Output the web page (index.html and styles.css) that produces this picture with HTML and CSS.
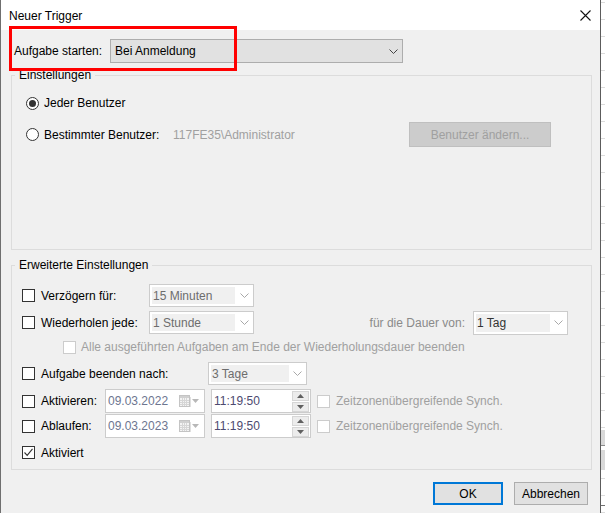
FILE: index.html
```html
<!DOCTYPE html>
<html lang="de">
<head>
<meta charset="utf-8">
<title>Neuer Trigger</title>
<link rel="stylesheet" href="styles.css">
</head>
<body>
<div class="screen">
  <div class="dialog">
    <div class="titlebar">
      <span class="title">Neuer Trigger</span>
      <svg class="close" width="11" height="11" viewBox="0 0 11 11"><path d="M0.5 0.5L10.5 10.5M10.5 0.5L0.5 10.5" stroke="#111" stroke-width="1.1" fill="none"/></svg>
    </div>

    <div class="start-row">
      <span class="start-label">Aufgabe starten:</span>
      <div class="main-select">
        <span>Bei Anmeldung</span>
        <svg class="chev" width="9" height="5" viewBox="0 0 9 5"><path d="M0.5 0.5L4.5 4.5L8.5 0.5" stroke="#444" stroke-width="1" fill="none"/></svg>
      </div>
    </div>

    <fieldset class="group group-settings">
      <legend>Einstellungen</legend>
      <div class="opt-row opt-first">
        <span class="radio checked"></span>
        <span>Jeder Benutzer</span>
      </div>
      <div class="opt-row opt-second">
        <span class="radio"></span>
        <span class="user-label">Bestimmter Benutzer:</span>
        <span class="user-name muted">117FE35\Administrator</span>
        <button class="btn btn-disabled">Benutzer ändern...</button>
      </div>
    </fieldset>

    <fieldset class="group group-advanced">
      <legend>Erweiterte Einstellungen</legend>

      <div class="adv-row row-delay">
        <span class="check"></span>
        <span class="adv-label w-short">Verzögern für:</span>
        <div class="combo w-105"><span class="field">15 Minuten</span><svg class="chev" width="9" height="5" viewBox="0 0 9 5"><path d="M0.5 0.5L4.5 4.5L8.5 0.5" stroke="#a8a8a8" stroke-width="1" fill="none"/></svg></div>
      </div>

      <div class="adv-row row-repeat">
        <span class="check"></span>
        <span class="adv-label w-short">Wiederholen jede:</span>
        <div class="combo w-105"><span class="field">1 Stunde</span><svg class="chev" width="9" height="5" viewBox="0 0 9 5"><path d="M0.5 0.5L4.5 4.5L8.5 0.5" stroke="#a8a8a8" stroke-width="1" fill="none"/></svg></div>
        <span class="dauer-label">für die Dauer von:</span>
        <div class="combo w-95 combo-dauer"><span class="field field-dark">1 Tag</span><svg class="chev" width="9" height="5" viewBox="0 0 9 5"><path d="M0.5 0.5L4.5 4.5L8.5 0.5" stroke="#a8a8a8" stroke-width="1" fill="none"/></svg></div>
      </div>

      <div class="adv-row row-sub">
        <span class="check disabled"></span>
        <span class="muted">Alle ausgeführten Aufgaben am Ende der Wiederholungsdauer beenden</span>
      </div>

      <div class="adv-row row-stop">
        <span class="check"></span>
        <span class="adv-label w-long">Aufgabe beenden nach:</span>
        <div class="combo w-99"><span class="field">3 Tage</span><svg class="chev" width="9" height="5" viewBox="0 0 9 5"><path d="M0.5 0.5L4.5 4.5L8.5 0.5" stroke="#a8a8a8" stroke-width="1" fill="none"/></svg></div>
      </div>

      <div class="adv-row row-date">
        <span class="check"></span>
        <span class="adv-label w-date">Aktivieren:</span>
        <div class="datebox">
          <span class="date-text">09.03.2022</span>
          <svg class="cal" width="12" height="12" viewBox="0 0 12 12"><rect x="0.5" y="0.5" width="10" height="11" fill="#f4f4f4" stroke="#c4c4c4"/><rect x="1" y="1" width="9" height="2" fill="#d0d0d0"/><path d="M1 5.5H10M1 7.5H10M1 9.5H10M3.5 3V11M5.5 3V11M7.5 3V11" stroke="#d6d6d6" stroke-width="1"/><rect x="11" y="2" width="1" height="10" fill="#e0e0e0"/></svg>
          <svg class="cal-arrow" width="7" height="4" viewBox="0 0 7 4"><path d="M0 0H7L3.5 4Z" fill="#b8b8b8"/></svg>
        </div>
        <div class="timebox">
          <span class="time-text">11:19:50</span>
          <span class="spin">
            <span class="spin-btn"><svg width="7" height="4" viewBox="0 0 7 4"><path d="M0 4H7L3.5 0Z" fill="#606060"/></svg></span>
            <span class="spin-btn"><svg width="7" height="4" viewBox="0 0 7 4"><path d="M0 0H7L3.5 4Z" fill="#606060"/></svg></span>
          </span>
        </div>
        <span class="check disabled"></span>
        <span class="muted">Zeitzonenübergreifende Synch.</span>
      </div>

      <div class="adv-row row-date row-expire">
        <span class="check"></span>
        <span class="adv-label w-date">Ablaufen:</span>
        <div class="datebox">
          <span class="date-text">09.03.2023</span>
          <svg class="cal" width="12" height="12" viewBox="0 0 12 12"><rect x="0.5" y="0.5" width="10" height="11" fill="#f4f4f4" stroke="#c4c4c4"/><rect x="1" y="1" width="9" height="2" fill="#d0d0d0"/><path d="M1 5.5H10M1 7.5H10M1 9.5H10M3.5 3V11M5.5 3V11M7.5 3V11" stroke="#d6d6d6" stroke-width="1"/><rect x="11" y="2" width="1" height="10" fill="#e0e0e0"/></svg>
          <svg class="cal-arrow" width="7" height="4" viewBox="0 0 7 4"><path d="M0 0H7L3.5 4Z" fill="#b8b8b8"/></svg>
        </div>
        <div class="timebox">
          <span class="time-text">11:19:50</span>
          <span class="spin">
            <span class="spin-btn"><svg width="7" height="4" viewBox="0 0 7 4"><path d="M0 4H7L3.5 0Z" fill="#606060"/></svg></span>
            <span class="spin-btn"><svg width="7" height="4" viewBox="0 0 7 4"><path d="M0 0H7L3.5 4Z" fill="#606060"/></svg></span>
          </span>
        </div>
        <span class="check disabled"></span>
        <span class="muted">Zeitzonenübergreifende Synch.</span>
      </div>

      <div class="adv-row row-active">
        <span class="check checked"><svg width="11" height="11" viewBox="0 0 11 11"><path d="M1.5 5.5L4.2 8.3L9.5 1.8" stroke="#333" stroke-width="1.1" fill="none"/></svg></span>
        <span class="adv-label">Aktiviert</span>
      </div>
    </fieldset>

    <div class="actions">
      <button class="btn btn-ok">OK</button>
      <button class="btn btn-cancel">Abbrechen</button>
    </div>

    <div class="annotation"></div>
  </div>
  <div class="backdrop"></div>
</div>
</body>
</html>
```

FILE: styles.css
```css
* { box-sizing: border-box; }
html, body { margin: 0; padding: 0; }
body {
  font-family: "Liberation Sans", Arial, sans-serif;
  font-size: 12px;
  color: #000;
  width: 605px;
  height: 513px;
  overflow: hidden;
  background: #fff;
}
.screen { display: flex; width: 605px; height: 513px; }
.dialog {
  position: relative;
  flex: none;
  width: 601px;
  height: 513px;
  background: #f0f0f0;
  border-left: 1px solid #6f6f6f;
  border-right: 1px solid #5c5c5c;
}
.titlebar {
  height: 30px;
  background: #fff;
  display: flex;
  align-items: center;
  justify-content: space-between;
  padding: 0 9px 0 8px;
}
.title { padding-top: 1px; }
.close { display: block; }

.start-row {
  display: flex;
  align-items: center;
  margin-top: 9px;
  padding-left: 13px;
  height: 24px;
}
.start-label { width: 96px; flex: none; }
.main-select {
  width: 293px;
  height: 24px;
  display: flex;
  align-items: center;
  justify-content: space-between;
  background: #e1e1e1;
  border: 1px solid #adadad;
  padding: 0 4px 0 4px;
}
.chev { display: block; flex: none; }

.group {
  margin: 0 0 0 10px;
  width: 581px;
  padding: 0;
  border: 1px solid #dcdcdc;
  min-width: 0;
}
.group legend {
  margin-left: 3px;
  padding: 0 4px;
  line-height: 14px;
}
.group-settings { margin-top: 5px; height: 182px; }
.group-advanced { margin-top: 8px; height: 212px; }

.opt-row { display: flex; align-items: center; padding-left: 14px; }
.opt-first { margin-top: 11px; height: 20px; }
.opt-second { margin-top: 9px; height: 25px; }
.radio {
  flex: none;
  width: 13px;
  height: 13px;
  border: 1px solid #333;
  border-radius: 50%;
  background: #fff;
  margin-right: 5px;
  display: flex;
  align-items: center;
  justify-content: center;
}
.radio.checked::after {
  content: "";
  width: 7px;
  height: 7px;
  border-radius: 50%;
  background: #333;
}
.user-label { width: 129px; flex: none; }
.user-name { width: 236px; flex: none; }
.muted { color: #a0a0a0; }

.btn {
  font: inherit;
  color: #000;
  background: #e1e1e1;
  border: 1px solid #adadad;
  height: 23px;
  padding: 0;
  margin: 0;
}
.btn-disabled {
  width: 142px;
  height: 25px;
  background: #cccccc;
  border-color: #bfbfbf;
  color: #a0a0a0;
}

.adv-row { display: flex; align-items: center; padding-left: 10px; }
.row-delay { margin-top: 12px; height: 23px; }
.row-repeat { margin-top: 4px; height: 23px; }
.row-sub { margin-top: 2px; height: 22px; padding-left: 51px; }
.row-stop { margin-top: 4px; height: 23px; }
.row-date { margin-top: 4px; height: 24px; }
.row-expire { margin-top: 1px; }
.row-active { margin-top: 3px; height: 23px; }

.check {
  flex: none;
  width: 13px;
  height: 13px;
  border: 1px solid #333;
  background: #fff;
  margin-right: 6px;
  display: flex;
  align-items: center;
  justify-content: center;
}
.row-sub .check { margin-right: 5px; }
.check.disabled { border-color: #cccccc; }
.check svg { display: block; }

.adv-label { flex: none; }
.w-short { width: 108px; }
.w-long { width: 167px; }
.w-date { width: 64px; }

.combo {
  flex: none;
  height: 23px;
  display: flex;
  align-items: center;
  justify-content: space-between;
  background: #fff;
  border: 1px solid #cccccc;
  padding: 2px 4px 2px 2px;
}
.combo .field {
  align-self: stretch;
  display: flex;
  align-items: center;
  background: #f0f0f0;
  color: #6d6d6d;
  padding-left: 1px;
}
.combo .field-dark { color: #333; }
.w-105 { width: 105px; }
.w-105 .field { width: 83px; }
.w-95 { width: 95px; height: 24px; }
.w-95 .field { width: 74px; }
.w-99 { width: 99px; }
.w-99 .field { width: 78px; }

.dauer-label { margin-left: auto; margin-right: 8px; color: #8a8a8a; }
.combo-dauer { margin-right: 23px; }

.datebox, .timebox {
  flex: none;
  width: 100px;
  height: 24px;
  display: flex;
  align-items: center;
  background: #fff;
  border: 1px solid #cccccc;
}
.datebox { padding-left: 2px; margin-right: 6px; }
.date-text { color: #6d7690; width: 71px; }
.cal { display: block; margin-right: 1px; }
.cal-arrow { display: block; }
.timebox { padding-left: 2px; margin-right: 6px; justify-content: space-between; padding-right: 1px; }
.time-text { color: #4d4a70; }
.spin {
  width: 17px;
  height: 21px;
  display: flex;
  flex-direction: column;
  gap: 1px;
}
.spin-btn {
  flex: 1;
  display: flex;
  align-items: center;
  justify-content: center;
  background: #ececec;
  border: 1px solid #d6d6d6;
}
.spin-btn svg { display: block; }

.actions {
  display: flex;
  justify-content: flex-end;
  gap: 11px;
  margin-top: 12px;
  padding-right: 12px;
}
.btn-ok { width: 70px; border: 2px solid #0078d7; }
.btn-cancel { width: 74px; }

.annotation {
  position: absolute;
  left: 8px;
  top: 26px;
  width: 228px;
  height: 45px;
  border: 3px solid #ff0000;
  pointer-events: none;
}

.backdrop {
  flex: 1;
  background:
    linear-gradient(to bottom, transparent 0 430px, #d9d9d9 430px 445px, #8a8a8a 445px 446px, #fff 446px 450px, #d9d9d9 450px 470px, transparent 470px 505px, #707070 505px 506px, transparent 506px),
    repeating-linear-gradient(to bottom, #fff 0 2px, #dcdcdc 2px 3px, #fff 3px 17px);
}
```
